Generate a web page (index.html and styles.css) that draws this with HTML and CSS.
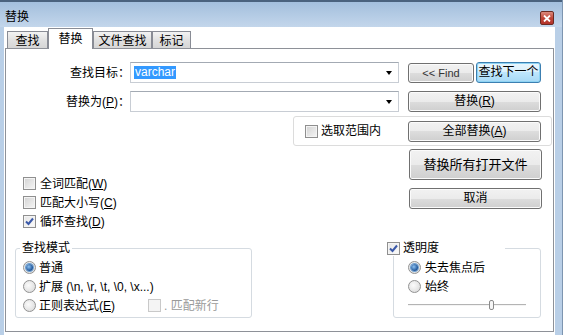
FILE: index.html
```html
<!DOCTYPE html>
<html lang="zh-CN">
<head>
    <meta charset="UTF-8">
    <title>替换</title>
    <link rel="stylesheet" href="styles.css">
</head>
<body>

<div class="window">
    <div class="titlebar">
        <span class="title">替换</span>
        <span class="close">
            <svg width="8" height="7" viewBox="0 0 8 7"><path d="M1 0.5 L7 6.5 M7 0.5 L1 6.5" stroke="#fff" stroke-width="1.8"/></svg>
        </span>
    </div>

    <div class="client">
        <!-- 分页 -->
        <div class="tabs">
            <span class="tab t1">查找</span>
            <span class="tab t2 active">替换</span>
            <span class="tab t3">文件查找</span>
            <span class="tab t4">标记</span>
        </div>

        <div class="panel">
            <div class="row">
                <span class="field-label">查找目标<span class="colon">：</span></span>
                <div class="combo"><span class="sel">varchar</span><span class="arrow"></span></div>
                <div class="btn-pair">
                    <button class="btn find-back">&lt;&lt; Find</button>
                    <button class="btn focused find-next">查找下一个</button>
                </div>
            </div>

            <div class="row row2">
                <span class="field-label">替换为(<u>P</u>)<span class="colon">：</span></span>
                <div class="combo"><span class="arrow"></span></div>
                <button class="btn wide">替换(<u>R</u>)</button>
            </div>

            <div class="range-box">
                <span class="opt"><span class="check"></span>选取范围内</span>
                <button class="btn wide">全部替换(<u>A</u>)</button>
            </div>

            <div class="row4">
                <div class="options">
                    <span class="opt"><span class="check"></span>全词匹配(<u>W</u>)</span>
                    <span class="opt"><span class="check"></span>匹配大小写(<u>C</u>)</span>
                    <span class="opt"><span class="check checked"><svg width="9" height="9" viewBox="0 0 9 9"><path d="M1 4.5 L3.5 7 L8 1.5" fill="none" stroke="#3a58a8" stroke-width="2"/></svg></span>循环查找(<u>D</u>)</span>
                </div>
                <div class="actions">
                    <button class="btn wide tall">替换所有打开文件</button>
                    <button class="btn wide">取消</button>
                </div>
            </div>

            <div class="row5">
                <div class="group mode">
                    <div class="group-title">查找模式</div>
                    <span class="opt"><span class="radio on"></span>普通</span>
                    <span class="opt"><span class="radio"></span>扩展 (\n, \r, \t, \0, \x...)</span>
                    <span class="opt"><span class="radio"></span>正则表达式(<u>E</u>)
                        <span class="opt disabled newline"><span class="check off"></span>. 匹配新行</span>
                    </span>
                </div>

                <div class="group alpha">
                    <div class="group-title alpha-title"><span class="check checked"><svg width="9" height="9" viewBox="0 0 9 9"><path d="M1 4.5 L3.5 7 L8 1.5" fill="none" stroke="#3a58a8" stroke-width="2"/></svg></span>透明度</div>
                    <span class="opt"><span class="radio on"></span>失去焦点后</span>
                    <span class="opt"><span class="radio"></span>始终</span>
                    <div class="slider"><span class="thumb"></span></div>
                </div>
            </div>
        </div>
    </div>
</div>

</body>
</html>
```

FILE: styles.css
```css
* {
    box-sizing: border-box;
}
body {
    margin: 0;
    background: #fff;
    font-family: "Liberation Sans", "Noto Sans CJK SC", sans-serif;
    font-size: 12px;
    color: #000;
}
u {
    text-decoration: underline;
}
.window {
    width: 563px;
    height: 335px;
    background: #b9cfe7;
    border-right: 1px solid #7d95b0;
    display: flex;
    flex-direction: column;
}
.titlebar {
    height: 27px;
    padding: 10px 8px 0 5px;
    display: flex;
    justify-content: space-between;
    align-items: flex-start;
    background: linear-gradient(#4a627e 0, #4a627e 2px, #a3bfdd 2px, #c3d6eb 100%);
}
.title {
    line-height: 15px;
}
.close {
    width: 14px;
    height: 14px;
    margin-top: 1px;
    border: 1px solid #6b2a22;
    border-radius: 2px;
    background: linear-gradient(#dc8b7e, #c0473a 50%, #b3322a);
    display: flex;
    align-items: center;
    justify-content: center;
}

.client {
    flex: 1;
    margin: 0 7px 0 4px;
    padding: 1px 1px 0 1px;
    background: #fff;
    display: flex;
    flex-direction: column;
}

/* 分页 */
.tabs {
    height: 20px;
    padding-left: 2px;
    display: flex;
    align-items: flex-end;
}
.tab {
    height: 17px;
    border: 1px solid #898c95;
    border-bottom: none;
    background: linear-gradient(#f3f3f3, #e1e1e1 50%, #d6d6d6);
    line-height: 16px;
    padding-top: 1px;
    text-align: center;
}
.tab.active {
    height: 21px;
    margin-bottom: -1px;
    background: #fff;
    padding-top: 0;
    line-height: 20px;
    position: relative;
    z-index: 1;
}
.t1 { width: 41px; }
.t2 { width: 45px; }
.t3 { width: 59px; }
.t4 { width: 39px; }

.panel {
    height: 284px;
    border: 1px solid #8e9198;
    padding-top: 13px;
}

.row {
    display: flex;
    align-items: center;
    height: 21px;
}
.row2 {
    margin-top: 8px;
}
.field-label {
    width: 124px;
    text-align: right;
    line-height: 16px;
}
.colon {
    font-family: "Noto Sans CJK JP", sans-serif;
}
.combo {
    width: 269px;
    height: 21px;
    margin-right: 9px;
    border: 1px solid #c8cdd4;
    border-top-color: #a3aab3;
    display: flex;
    align-items: center;
    padding-left: 3px;
}
.sel {
    background: #3399ff;
    color: #fff;
    line-height: 13px;
    padding: 0 1px;
}
.arrow {
    margin-left: auto;
    margin-right: 6px;
    width: 0;
    height: 0;
    border-left: 3.5px solid transparent;
    border-right: 3.5px solid transparent;
    border-top: 4px solid #000;
}
.btn-pair {
    display: flex;
    gap: 2px;
}
.btn {
    height: 21px;
    padding: 0;
    border: 1px solid #707070;
    border-radius: 3px;
    background: linear-gradient(#f2f2f2, #ebebeb 50%, #dddddd 50%, #cfcfcf);
    box-shadow: inset 0 0 0 1px #fbfbfb;
    font: inherit;
    color: #000;
    line-height: 17px;
    text-align: center;
}
.find-back {
    width: 66px;
    height: 20px;
    margin-top: 1px;
    color: #333;
    font-size: 11px;
}
.find-next {
    width: 65px;
}
.focused {
    border-color: #3c7fb1;
    background: linear-gradient(#eaf6fd, #d9f0fc 50%, #bee6fd 50%, #a7d9f5);
    box-shadow: inset 0 0 0 1px #8ed3f3;
}
.wide {
    width: 133px;
}
.tall {
    height: 31px;
    font-size: 13px;
}

.range-box {
    width: 259px;
    height: 30px;
    margin: 4px 0 0 287px;
    border: 1px solid #dcdcdc;
    border-radius: 3px;
    padding: 0 10px 0 11px;
    display: flex;
    align-items: center;
    justify-content: space-between;
}

.opt {
    display: flex;
    align-items: center;
    height: 19px;
    line-height: 16px;
    white-space: nowrap;
}
.check {
    width: 13px;
    height: 13px;
    margin-right: 3px;
    border: 1px solid #8f8f8f;
    background: linear-gradient(135deg, #d2d2d2, #f6f6f6);
    box-shadow: inset 0 0 0 1px #f4f4f4;
    display: flex;
    align-items: center;
    justify-content: center;
    flex-shrink: 0;
}
.check.checked {
    background: linear-gradient(135deg, #e6e6e6, #fbfbfb);
}
.check.off {
    border-color: #c9c9c9;
    background: #f4f4f4;
    box-shadow: none;
}
.radio {
    width: 13px;
    height: 13px;
    margin-right: 3px;
    border: 1px solid #929292;
    border-radius: 50%;
    background: radial-gradient(circle at 40% 40%, #fbfbfb, #d6d6d6);
    display: flex;
    align-items: center;
    justify-content: center;
    flex-shrink: 0;
}
.radio.on::after {
    content: "";
    width: 7px;
    height: 7px;
    border-radius: 50%;
    background: radial-gradient(circle at 40% 40%, #8cc0f0, #1a5196 70%);
    box-shadow: 0 0 0 1px #6d9fd0;
}

.row4 {
    margin-top: 3px;
    display: flex;
    height: 82px;
}
.options {
    margin: 25px 0 0 17px;
    display: flex;
    flex-direction: column;
}
.options .check {
    margin-right: 4px;
}
.actions {
    margin: 0 11px 0 auto;
    display: flex;
    flex-direction: column;
    gap: 8px;
}

.row5 {
    margin-top: 17px;
    display: flex;
}
.group {
    height: 70px;
    border: 1px solid #d5dbe1;
    border-radius: 3px;
    display: flex;
    flex-direction: column;
}
.group-title {
    width: fit-content;
    margin: -9px 0 2px 4px;
    padding: 0 2px;
    background: #fff;
    line-height: 16px;
    display: flex;
    align-items: center;
}
.mode {
    width: 237px;
    margin-left: 9px;
    padding-left: 7px;
}
.mode .group-title {
    margin-left: -3px;
}
.newline {
    margin-left: 33px;
}
.disabled {
    color: #9a9a9a;
}
.alpha {
    width: 148px;
    margin-left: 141px;
    padding-left: 14px;
}
.alpha-title {
    width: 118px;
    margin-left: -21px;
    padding: 0;
}
.alpha .radio {
    margin-right: 4px;
}
.slider {
    width: 118px;
    height: 17px;
    display: flex;
    align-items: center;
    background: linear-gradient(#b4b4b4, #b4b4b4 1px, #f4f4f4 1px) left center / 100% 2px no-repeat;
}
.thumb {
    width: 5px;
    height: 10px;
    margin-left: 81px;
    border: 1px solid #8a8a8a;
    border-radius: 2px;
    background: #f6f6f6;
}
```
